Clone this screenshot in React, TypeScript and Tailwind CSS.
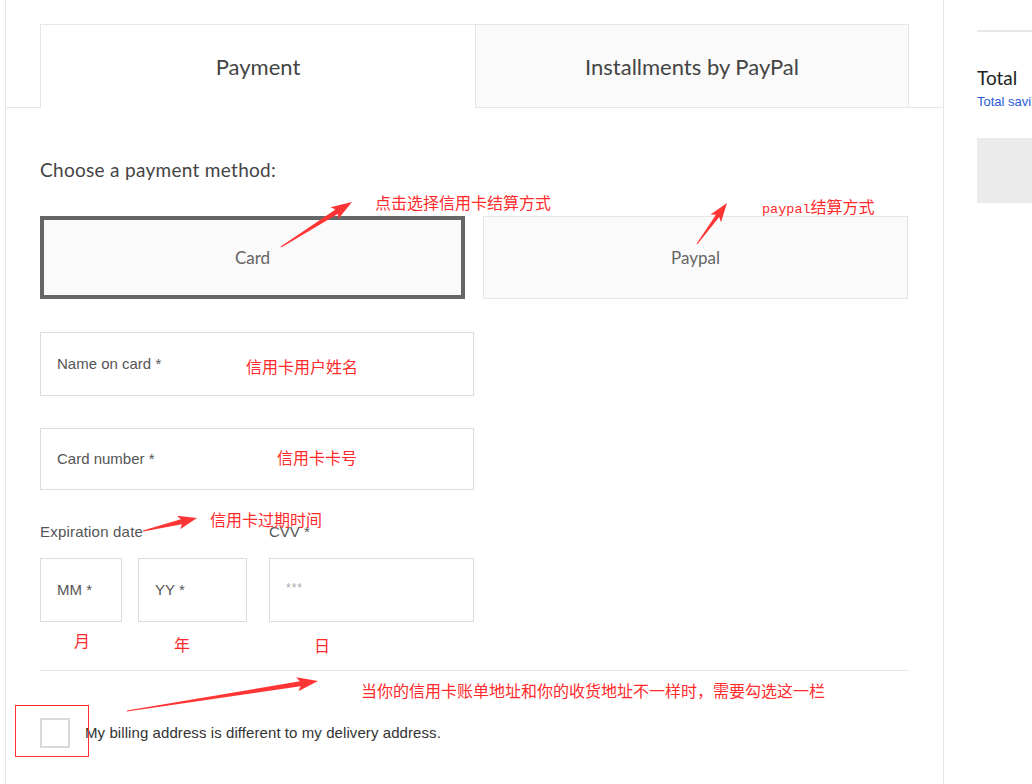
import { FunctionComponent } from 'react'

const geo = { fontFamily: 'Lato, "Noto Sans", sans-serif' }
const helv = { fontFamily: '"Liberation Sans", Arial, sans-serif' }
const cjk = { fontFamily: '"Noto Sans CJK SC", "Noto Sans", sans-serif' }

// 红色箭头 (标注)
const arrowPoints = (x1: number, y1: number, x2: number, y2: number, headLen = 18, headW = 14, shaftW = 5) => {
  const len = Math.hypot(x2 - x1, y2 - y1)
  const dx = (x2 - x1) / len
  const dy = (y2 - y1) / len
  const nx = -dy
  const ny = dx
  const bx = x2 - dx * headLen
  const by = y2 - dy * headLen
  const pts = [
    [x1 + nx * 0.5, y1 + ny * 0.5],
    [bx + nx * (shaftW / 2), by + ny * (shaftW / 2)],
    [bx - dx * 3 + nx * (headW / 2), by - dy * 3 + ny * (headW / 2)],
    [x2, y2],
    [bx - dx * 3 - nx * (headW / 2), by - dy * 3 - ny * (headW / 2)],
    [bx - nx * (shaftW / 2), by - ny * (shaftW / 2)],
    [x1 - nx * 0.5, y1 - ny * 0.5],
  ]
  return pts.map((p) => p.join(',')).join(' ')
}

const Annotations: FunctionComponent = () => {
  const notes: { x: number; y: number; text: string }[] = [
    { x: 375, y: 191, text: '点击选择信用卡结算方式' },
    { x: 246, y: 355, text: '信用卡用户姓名' },
    { x: 277, y: 446, text: '信用卡卡号' },
    { x: 210, y: 508, text: '信用卡过期时间' },
    { x: 74, y: 629, text: '月' },
    { x: 174, y: 633, text: '年' },
    { x: 314, y: 634, text: '日' },
    { x: 361, y: 679, text: '当你的信用卡账单地址和你的收货地址不一样时，需要勾选这一栏' },
  ]

  return (
    <div className="pointer-events-none absolute inset-0">
      <svg className="absolute inset-0" width={1032} height={784}>
        <polygon points={arrowPoints(281, 247, 352, 202)} fill="#ff3535" />
        <polygon points={arrowPoints(697, 244, 727, 203, 16, 13, 4)} fill="#ff3535" />
        <polygon points={arrowPoints(143, 531, 197, 518, 16, 14, 5)} fill="#ff3535" />
        <polygon points={arrowPoints(127, 711, 318, 681, 18, 14, 5)} fill="#ff3535" />
      </svg>

      {notes.map((n) => (
        <span
          key={n.text}
          className="absolute text-[16px] leading-[22px] whitespace-nowrap text-[#ff2a2a]"
          style={{ left: n.x, top: n.y, ...cjk }}
        >
          {n.text}
        </span>
      ))}

      <span
        className="absolute text-[16px] leading-[22px] whitespace-nowrap text-[#ff2a2a]"
        style={{ left: 762, top: 195, ...cjk }}
      >
        <span className="text-[13.5px]" style={{ fontFamily: '"Liberation Mono", monospace' }}>
          paypal
        </span>
        结算方式
      </span>

      {/* 勾选框外的红框 */}
      <div className="absolute top-[705px] left-[15px] h-[52px] w-[74px] border border-[#ff3030]" />
    </div>
  )
}

const Field: FunctionComponent<{ label: string; className?: string; muted?: boolean }> = ({
  label,
  className = '',
  muted,
}) => (
  <div className={`flex items-center border border-[#dcdcdc] bg-white pl-4 ${className}`}>
    {muted ? (
      <span className="-mt-1 text-[12px] tracking-[1px] text-[#aaa]" style={helv}>
        ***
      </span>
    ) : (
      <span className="text-[15px] text-[#555]" style={helv}>
        {label}
      </span>
    )}
  </div>
)

const App: FunctionComponent = () => {
  return (
    <div className="relative flex h-[784px] w-[1032px] overflow-hidden bg-white">
      {/* main panel */}
      <div className="ml-[5px] flex w-[939px] shrink-0 flex-col border-x border-[#e6e6e6] pt-6">
        {/* tabs */}
        <div className="flex h-[84px]">
          <div className="w-[34px] border-b border-[#e6e6e6]" />
          <div className="flex w-[435px] items-center justify-center border-t border-l border-[#e6e6e6] bg-white">
            <span className="text-[22px] text-[#444]" style={geo}>
              Payment
            </span>
          </div>
          <div className="flex w-[434px] items-center justify-center border border-[#e6e6e6] bg-[#fafafa]">
            <span className="text-[22px] text-[#444]" style={geo}>
              Installments by PayPal
            </span>
          </div>
          <div className="w-[34px] border-b border-[#e6e6e6]" />
        </div>

        <div className="flex flex-col pl-[34px]">
          <p className="mt-[50px] text-[19px] leading-6 tracking-[0.3px] text-[#444]" style={geo}>
            Choose a payment method:
          </p>

          {/* payment methods */}
          <div className="mt-[34px] flex gap-[18px]">
            <div className="flex h-[83px] w-[425px] items-center justify-center border-4 border-[#666] bg-[#fafafa]">
              <span className="text-[17px] text-[#666]" style={geo}>
                Card
              </span>
            </div>
            <div className="flex h-[83px] w-[425px] items-center justify-center border border-[#e6e6e6] bg-[#fafafa]">
              <span className="text-[17px] text-[#666]" style={geo}>
                Paypal
              </span>
            </div>
          </div>

          <Field label="Name on card *" className="mt-[33px] h-[64px] w-[434px]" />
          <Field label="Card number *" className="mt-[32px] h-[62px] w-[434px]" />

          {/* expiration */}
          <div className="mt-[32px] flex text-[15px] leading-5 text-[#555]" style={helv}>
            <span className="w-[229px] tracking-[0.2px]">Expiration date</span>
            <span>CVV *</span>
          </div>
          <div className="mt-4 flex">
            <Field label="MM *" className="h-[64px] w-[82px]" />
            <Field label="YY *" className="ml-[16px] h-[64px] w-[109px]" />
            <Field label="" muted className="ml-[22px] h-[64px] w-[205px]" />
          </div>

          <div className="mt-[48px] h-px w-[869px] bg-[#e8e8e8]" />

          {/* billing address checkbox */}
          <div className="mt-[47px] flex items-center">
            <div className="h-[30px] w-[30px] border-2 border-[#dadada] bg-white" />
            <span className="ml-[15px] text-[15px] tracking-[0.08px] text-[#333]" style={helv}>
              My billing address is different to my delivery address.
            </span>
          </div>
        </div>
      </div>

      {/* summary sidebar */}
      <div className="ml-[33px] flex min-w-0 flex-1 flex-col pt-[30px]">
        <div className="h-[2px] w-full bg-[#e8e8e8]" />
        <p className="mt-[34px] text-[19px] leading-6 text-[#222]" style={geo}>
          Total
        </p>
        <p className="mt-1 text-[13px] leading-4 whitespace-nowrap text-[#2a5bd7]" style={helv}>
          Total savings
        </p>
        <div className="mt-[28px] h-[65px] w-full bg-[#ebebeb]" />
      </div>

      <Annotations />
    </div>
  )
}

export default App
